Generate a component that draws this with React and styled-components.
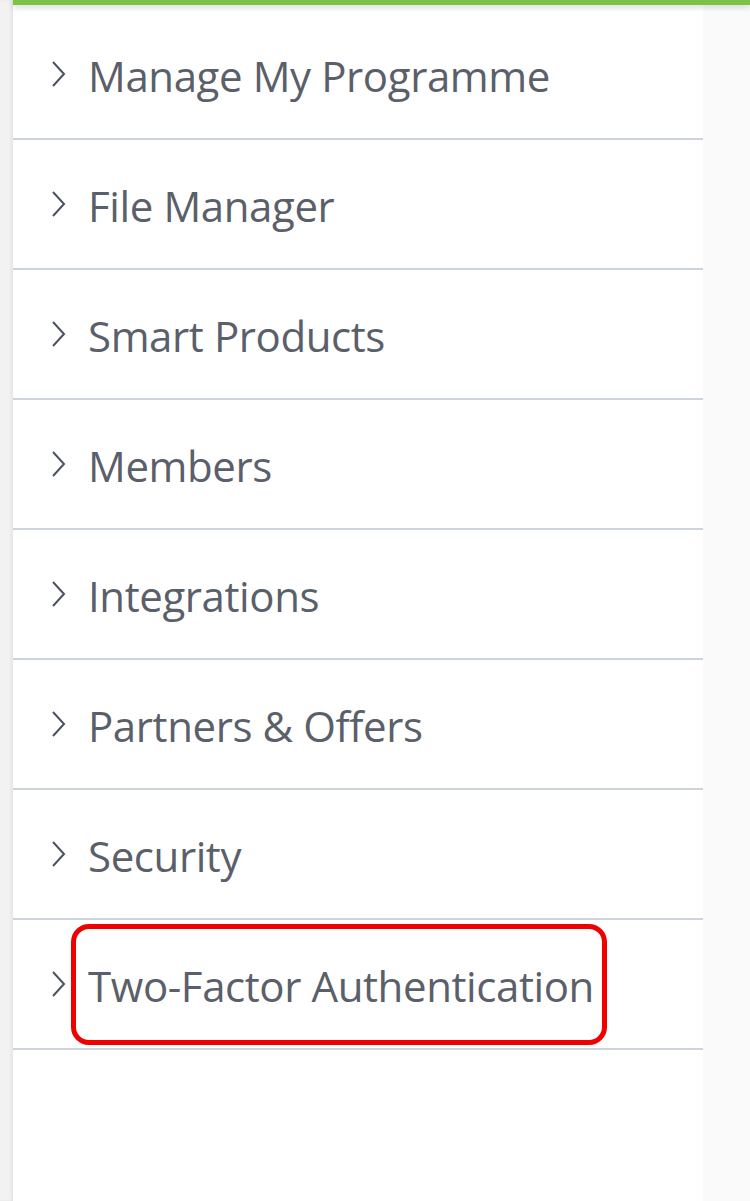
import styled, { createGlobalStyle } from "styled-components";

const items = [
  "Manage My Programme",
  "File Manager",
  "Smart Products",
  "Members",
  "Integrations",
  "Partners & Offers",
  "Security",
  "Two-Factor Authentication",
];

function Chevron() {
  return (
    <svg width="16" height="28" viewBox="0 0 16 28" fill="none">
      <path d="M2 2 L13 14 L2 26" stroke="#4b5160" strokeWidth="2" />
    </svg>
  );
}

function App() {
  return (
    <>
      <GlobalStyle />
      <Page>
        <LeftStrip />
        <Main>
          <TopBar />
          <Body>
            <Panel>
              {items.map((label, i) => (
                <Row key={label}>
                  <Chevron />
                  <Label>{label}</Label>
                  {i === items.length - 1 && <Highlight />}
                </Row>
              ))}
            </Panel>
            <Aside />
          </Body>
        </Main>
      </Page>
    </>
  );
}
export default App;

const GlobalStyle = createGlobalStyle`
  body {
    margin: 0;
    background: #fafafa;
    font-family: "Open Sans", "Noto Sans", sans-serif;
  }
`;
const Page = styled.div`
  display: flex;
  height: 1201px;
  overflow: hidden;
`;
const LeftStrip = styled.div`
  width: 13px;
  flex-shrink: 0;
  background: #f2f2f2;
  box-shadow: inset -2px 0 3px rgba(0, 0, 0, 0.06);
`;
const Main = styled.div`
  flex: 1;
  display: flex;
  flex-direction: column;
`;
const TopBar = styled.div`
  height: 5px;
  background: #7dc242;
  position: relative;
  z-index: 1;
  box-shadow: 0 2px 6px rgba(0, 0, 0, 0.18);
`;
const Body = styled.div`
  flex: 1;
  display: flex;
`;
const Panel = styled.div`
  width: 690px;
  background: #ffffff;
  padding-top: 5px;
`;
const Aside = styled.div`
  flex: 1;
  background: #fafafa;
`;
const Row = styled.div`
  position: relative;
  height: 128px;
  display: flex;
  align-items: center;
  padding-left: 38px;
  gap: 21px;
  border-bottom: 2px solid #cdd4de;
`;
const Label = styled.span`
  font-size: 42px;
  color: #5a5f6a;
  letter-spacing: -0.4px;
  position: relative;
  top: 1px;
`;
const Highlight = styled.div`
  position: absolute;
  left: 58px;
  top: 4px;
  width: 526px;
  height: 111px;
  border: 5px solid #f00000;
  border-radius: 18px;
`;
